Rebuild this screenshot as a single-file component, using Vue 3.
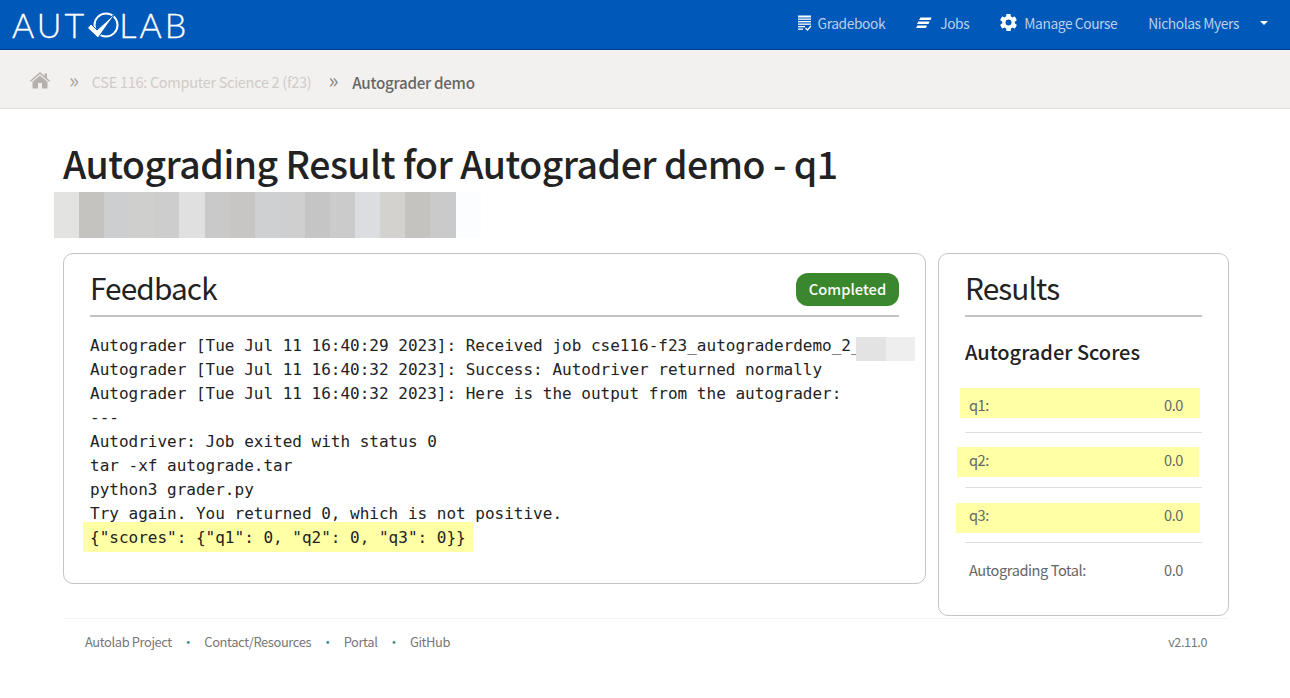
<script setup>
const mosaic = ['#e3e3e1','#c5c3c0','#ccced0','#cfd0ce','#cdcdcd','#e0e0e0','#c9c9c9','#c8c6c4','#ced0d2','#cfcfcf','#c5c5c5','#cbcbcb','#dcdde0','#d3d2cf','#c4c3c0','#cacaca','#fcfdff']
const lines = [
  'Autograder [Tue Jul 11 16:40:29 2023]: Received job cse116-f23_autograderdemo_2_',
  'Autograder [Tue Jul 11 16:40:32 2023]: Success: Autodriver returned normally',
  'Autograder [Tue Jul 11 16:40:32 2023]: Here is the output from the autograder:',
  '---',
  'Autodriver: Job exited with status 0',
  'tar -xf autograde.tar',
  'python3 grader.py',
  'Try again. You returned 0, which is not positive.',
]
const scores = [
  { name: 'q1:', hl: 'hl1' },
  { name: 'q2:', hl: 'hl2' },
  { name: 'q3:', hl: 'hl3' },
]
</script>

<template>
  <div class="page">
    <header class="nav">
      <div class="logo">
        <span>AUT</span>
        <svg class="logo-o" width="34" height="32" viewBox="0 0 34 32">
          <circle cx="20" cy="16" r="11.5" fill="none" stroke="#fff" stroke-width="2" />
          <path d="M1.5 19 L5 15 L11 21 L30 3.5 L12 29 Z" fill="#fff" stroke="#0059b8" stroke-width="1" />
        </svg>
        <span>LAB</span>
      </div>
      <nav class="menu">
        <a class="item gb">
          <svg width="15" height="16" viewBox="0 0 15 16" fill="#fff">
            <rect x="1" y="0.5" width="13" height="2" />
            <rect x="1" y="3.5" width="13" height="1.3" />
            <rect x="1" y="6" width="13" height="1.3" />
            <rect x="1" y="8.5" width="13" height="1.3" />
            <rect x="1" y="11" width="7" height="1.3" />
            <rect x="1" y="13.5" width="5" height="1.3" />
            <path d="M8.5 13 L10.5 15 L14 11" fill="none" stroke="#fff" stroke-width="1.3" />
          </svg>
          Gradebook
        </a>
        <a class="item jobs">
          <svg width="16" height="12" viewBox="0 0 16 12" fill="#fff">
            <path d="M4.5 0.5 H15.5 L14.5 3 H3 Z" />
            <path d="M2.5 4.5 H13.5 L12.5 7 H1 Z" />
            <path d="M1.5 8.5 H11 L10 11 H0 Z" />
          </svg>
          Jobs
        </a>
        <a class="item manage">
          <svg width="17" height="17" viewBox="2 2 20 20" fill="#fff">
            <path d="M19.4 13c.04-.33.1-.66.1-1s-.06-.67-.1-1l2.1-1.65c.2-.15.25-.42.12-.64l-2-3.46c-.12-.22-.39-.3-.61-.22l-2.49 1c-.52-.4-1.08-.73-1.69-.98l-.38-2.65A.49.49 0 0 0 14 2h-4c-.25 0-.46.18-.49.42l-.38 2.65c-.61.25-1.17.59-1.69.98l-2.49-1c-.23-.09-.49 0-.61.22l-2 3.46c-.13.22-.07.49.12.64L4.6 11c-.04.33-.1.66-.1 1s.06.67.1 1l-2.1 1.65c-.2.15-.25.42-.12.64l2 3.46c.12.22.39.3.61.22l2.49-1c.52.4 1.08.73 1.69.98l.38 2.65c.03.24.24.42.49.42h4c.25 0 .46-.18.49-.42l.38-2.65c.61-.25 1.17-.59 1.69-.98l2.49 1c.23.09.49 0 .61-.22l2-3.46c.12-.22.07-.49-.12-.64L19.4 13zM12 15.5a3.5 3.5 0 1 1 0-7 3.5 3.5 0 0 1 0 7z" />
          </svg>
          Manage Course
        </a>
        <a class="item user">
          Nicholas Myers
          <span class="caret"></span>
        </a>
      </nav>
    </header>

    <div class="crumbs">
      <svg class="home" width="20" height="17" viewBox="0 0 20 17" fill="#b5b1ae">
        <path d="M10 0 L14.5 3.9 V1.5 H17 V6.1 L20 8.7 L19 9.8 L10 2 L1 9.8 L0 8.7 Z" />
        <path d="M10 3.4 L17.5 9.8 V16.5 H12 V11 H8 V16.5 H2.5 V9.8 Z" />
      </svg>
      <span class="sep sep1">»</span>
      <span class="crumb">CSE 116: Computer Science 2 (f23)</span>
      <span class="sep sep2">»</span>
      <span class="crumb-cur">Autograder demo</span>
    </div>

    <main class="main">
      <h1 class="title">Autograding Result for Autograder demo - q1</h1>
      <div class="mosaic">
        <i v-for="(c, i) in mosaic" :key="i" :style="{ background: c }"></i>
      </div>

      <div class="cols">
        <section class="card feedback">
          <div class="head">
            <h2>Feedback</h2>
            <span class="badge">Completed</span>
          </div>
          <div class="output">
            <div class="redact"><i class="r1"></i><i class="r2"></i></div>
            <div v-for="(l, i) in lines" :key="i" class="line">{{ l }}</div>
            <div class="line lastline"><span class="lasthl"></span><span class="over">{"scores": {"q1": 0, "q2": 0, "q3": 0}}</span></div>
          </div>
        </section>

        <aside class="card results">
          <div class="head"><h2>Results</h2></div>
          <h3>Autograder Scores</h3>
          <div v-for="s in scores" :key="s.name" class="row">
            <span class="hl" :class="s.hl"></span>
            <span class="over">{{ s.name }}</span>
            <span class="over">0.0</span>
          </div>
          <div class="row total">
            <span>Autograding Total:</span>
            <span>0.0</span>
          </div>
        </aside>
      </div>

      <footer class="foot">
        <div class="links">
          <a>Autolab Project</a><span class="dot">·</span>
          <a>Contact/Resources</a><span class="dot">·</span>
          <a>Portal</a><span class="dot">·</span>
          <a>GitHub</a>
        </div>
        <span class="ver">v2.11.0</span>
      </footer>
    </main>
  </div>
</template>

<style scoped>
.page {
  width: 1290px;
  height: 698px;
  overflow: hidden;
  background: #fff;
  font-family: "Noto Sans CJK SC", "Noto Sans", sans-serif;
  font-size: 14px;
  color: #222;
}
.nav {
  height: 49px;
  background: #0059b8;
  border-bottom: 1px solid #00408a;
  display: flex;
  align-items: center;
  justify-content: space-between;
}
.logo {
  display: flex;
  align-items: center;
  margin-left: 12px;
  color: #fff;
  font-family: "Lato", sans-serif;
  font-weight: 300;
  font-size: 34px;
  line-height: 32px;
  letter-spacing: 3px;
  -webkit-text-stroke: 0.3px #fff;
}
.logo-o { margin: 0 -1px 0 -1px; }
.menu {
  display: flex;
  align-items: center;
  color: #bcd0ea;
  font-size: 13.8px;
  letter-spacing: -0.03em;
  line-height: 24px;
  position: relative;
  top: -2px;
}
.item { display: flex; align-items: center; }
.gb { margin-right: 31px; gap: 6px; }
.jobs { margin-right: 31px; gap: 8px; }
.manage { margin-right: 31px; gap: 7px; }
.user { margin-right: 22px; }
.caret {
  width: 0;
  height: 0;
  margin-left: 21px;
  border-left: 4px solid transparent;
  border-right: 4px solid transparent;
  border-top: 4px solid #fff;
}
.crumbs {
  height: 53px;
  padding-top: 5px;
  background: #f3f1ef;
  border-bottom: 1px solid #e2e0de;
  display: flex;
  align-items: center;
  padding-left: 30px;
  line-height: 24px;
  font-size: 14.5px;
  letter-spacing: -0.02em;
}
.home { margin-right: 19px; position: relative; top: -1px; }
.sep { color: #a8a3a0; font-size: 21px; position: relative; top: -3px; }
.sep1 { margin-right: 13px; }
.sep2 { margin: 0 14px 0 17px; color: #8a8582; }
.crumb { color: #d0cbc8; }
.crumb-cur { color: #666; font-weight: 500; font-size: 15.2px; }
.main { padding: 0 61px 0 63px; }
.title {
  margin: 29px 0 4px;
  font-size: 37.4px;
  letter-spacing: -0.013em;
  line-height: 50px;
  font-weight: 500;
  color: #222;
}
.mosaic {
  display: flex;
  height: 46px;
  margin: 0 0 15px -9px;
}
.mosaic i { width: 25.1px; }
.cols {
  display: flex;
  align-items: flex-start;
  gap: 12px;
}
.card {
  border: 1px solid #c4c4c4;
  border-radius: 10px;
  background: #fff;
  box-sizing: border-box;
}
.feedback { width: 863px; height: 331px; padding: 19px 26px 0; }
.results { width: 291px; height: 363px; padding: 19px 26px 0; }
.head {
  display: flex;
  align-items: flex-start;
  justify-content: space-between;
  height: 42px;
  border-bottom: 2px solid #c4c4c4;
}
h2 {
  margin: 0;
  font-size: 29.8px;
  letter-spacing: -0.03em;
  line-height: 29px;
  font-weight: 400;
  color: #222;
}
.badge {
  width: 103px;
  height: 33px;
  background: #3b872e;
  border-radius: 12px;
  color: #fff;
  font-size: 14.7px;
  font-weight: 500;
  text-align: center;
  line-height: 31px;
}
.output {
  position: relative;
  margin-top: 17px;
  font-family: "DejaVu Sans Mono", monospace;
  font-size: 16px;
  line-height: 24px;
  color: #222;
  white-space: pre;
}
.redact {
  position: absolute;
  left: 766px;
  top: 3px;
  display: flex;
  height: 24px;
}
.redact i { width: 29.5px; }
.r1 { background: #e3e3e3; }
.r2 { background: #eeeeee; }
.lastline { position: relative; }
.lasthl {
  position: absolute;
  left: -7px;
  top: -4px;
  width: 390px;
  height: 30px;
  background: #ffffa6;
}
.over { position: relative; }
h3 {
  margin: 19px 0 10px;
  font-size: 20px;
  line-height: 32px;
  font-weight: 500;
  color: #222;
}
.row {
  position: relative;
  display: flex;
  justify-content: space-between;
  height: 55px;
  box-sizing: border-box;
  padding: 15px 19px 0 4px;
  border-bottom: 1px solid #dedede;
  line-height: 24px;
  color: #666;
  font-size: 14.6px;
  letter-spacing: -0.03em;
}
.total { border-bottom: 0; }
.hl { position: absolute; height: 30px; background: #ffffa6; }
.hl1 { top: 10px; left: -5px; width: 240px; }
.hl2 { top: 14px; left: -8px; width: 242px; }
.hl3 { top: 15px; left: -9px; width: 244px; }
.foot {
  display: flex;
  justify-content: space-between;
  margin-top: 2px;
  height: 50px;
  box-sizing: border-box;
  border-top: 1px solid #f4f4f4;
  padding: 12px 22px 0;
  font-size: 12.9px;
  letter-spacing: -0.03em;
  line-height: 22px;
  color: #777;
}
.links { display: flex; }
.dot { margin: 0 10px; color: #3a8a8a; }
.ver { font-size: 12.6px; }
</style>
